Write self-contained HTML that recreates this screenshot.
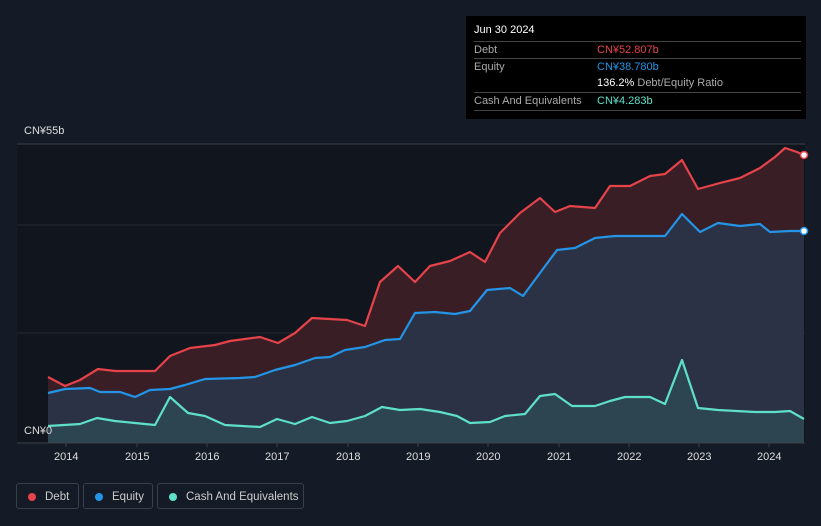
<!DOCTYPE html>
<html><head><meta charset="utf-8"><style>
body{margin:0;width:821px;height:526px;background:#151b26;font-family:"Liberation Sans",sans-serif;overflow:hidden;position:relative}
.tip{position:absolute;left:466px;top:16px;width:340px;height:103px;background:#000;color:#fff;font-size:11px}
.tip .r{position:absolute;left:8px;width:327px;border-top:1px solid #444;height:17px;line-height:17px;color:#aaa}
.tip .v{position:absolute;left:123px;top:0}
.leg{position:absolute;top:483px;height:26px;border:1px solid #3a404a;border-radius:3px;color:#ccc;font-size:11.5px;line-height:26px;box-sizing:border-box}
.leg i{position:absolute;top:9px;left:11px;width:8px;height:8px;border-radius:50%}
.leg span{position:absolute;left:28px}
.ax{position:absolute;top:451px;color:#ddd;font-size:11px}
</style></head><body>
<svg width="821" height="526" style="position:absolute;left:0;top:0">
<rect x="17" y="144" width="788" height="299" fill="#11151d"/>
<line x1="17" y1="144" x2="805" y2="144" stroke="#3a3f48"/>
<line x1="17" y1="225" x2="805" y2="225" stroke="#252a33"/>
<line x1="17" y1="333" x2="805" y2="333" stroke="#252a33"/>
<path fill="#3a1e25" d="M48,377 L65,386 L80,380 L98,369 L115,371 L155,371 L170,356 L190,348 L215,345 L230,341 L260,337 L278,343 L295,333 L312,318 L347,320 L365,326 L380,282 L398,266 L415,282 L430,266 L450,261 L470,252 L485,262 L500,233 L520,213 L540,198 L555,212 L570,206 L595,208 L610,186 L630,186 L650,176 L665,174 L682,160 L698,189 L720,183 L740,178 L760,168 L775,157 L785,148 L797,152 L804,155 L804,443 L48,443Z"/>
<path fill="#2b3246" d="M48,393 L65,389 L90,388 L100,392 L120,392 L135,397 L150,390 L170,389 L185,385 L205,379 L240,378 L255,377 L275,370 L295,365 L315,358 L330,357 L345,350 L365,347 L385,340 L400,339 L415,313 L435,312 L455,314 L470,311 L487,290 L510,288 L523,296 L540,273 L557,250 L575,248 L595,238 L615,236 L665,236 L682,214 L700,232 L718,223 L740,226 L760,224 L770,232 L790,231 L804,231 L804,443 L48,443Z"/>
<path fill="#2d4550" d="M48,426 L80,424 L97,418 L115,421 L135,423 L155,425 L170,397 L188,413 L205,416 L225,425 L260,427 L277,419 L295,424 L312,417 L330,423 L347,421 L365,416 L382,407 L400,410 L420,409 L440,412 L457,416 L470,423 L490,422 L505,416 L525,414 L540,396 L555,394 L572,406 L595,406 L610,401 L625,397 L650,397 L665,404 L682,360 L698,408 L718,410 L755,412 L775,412 L790,411 L804,419 L804,443 L48,443Z"/>
<g fill="none" stroke-width="2.2" stroke-linejoin="round">
<path stroke="#e5434a" d="M48,377 L65,386 L80,380 L98,369 L115,371 L155,371 L170,356 L190,348 L215,345 L230,341 L260,337 L278,343 L295,333 L312,318 L347,320 L365,326 L380,282 L398,266 L415,282 L430,266 L450,261 L470,252 L485,262 L500,233 L520,213 L540,198 L555,212 L570,206 L595,208 L610,186 L630,186 L650,176 L665,174 L682,160 L698,189 L720,183 L740,178 L760,168 L775,157 L785,148 L797,152 L804,155"/>
<path stroke="#2394e6" d="M48,393 L65,389 L90,388 L100,392 L120,392 L135,397 L150,390 L170,389 L185,385 L205,379 L240,378 L255,377 L275,370 L295,365 L315,358 L330,357 L345,350 L365,347 L385,340 L400,339 L415,313 L435,312 L455,314 L470,311 L487,290 L510,288 L523,296 L540,273 L557,250 L575,248 L595,238 L615,236 L665,236 L682,214 L700,232 L718,223 L740,226 L760,224 L770,232 L790,231 L804,231"/>
<path stroke="#5ee0c8" d="M48,426 L80,424 L97,418 L115,421 L135,423 L155,425 L170,397 L188,413 L205,416 L225,425 L260,427 L277,419 L295,424 L312,417 L330,423 L347,421 L365,416 L382,407 L400,410 L420,409 L440,412 L457,416 L470,423 L490,422 L505,416 L525,414 L540,396 L555,394 L572,406 L595,406 L610,401 L625,397 L650,397 L665,404 L682,360 L698,408 L718,410 L755,412 L775,412 L790,411 L804,419"/>
</g>
<circle cx="804" cy="155" r="3.5" fill="#fff" stroke="#e5434a" stroke-width="1.5"/>
<circle cx="804" cy="231" r="3.5" fill="#fff" stroke="#2394e6" stroke-width="1.5"/>
<line x1="17" y1="443" x2="805" y2="443" stroke="#3a3f48"/>
<g stroke="#3a3f48"><line x1="66" y1="443" x2="66" y2="447"/><line x1="137" y1="443" x2="137" y2="447"/><line x1="207" y1="443" x2="207" y2="447"/><line x1="277" y1="443" x2="277" y2="447"/><line x1="348" y1="443" x2="348" y2="447"/><line x1="418" y1="443" x2="418" y2="447"/><line x1="488" y1="443" x2="488" y2="447"/><line x1="559" y1="443" x2="559" y2="447"/><line x1="629" y1="443" x2="629" y2="447"/><line x1="699" y1="443" x2="699" y2="447"/><line x1="769" y1="443" x2="769" y2="447"/></g>
</svg>
<div style="position:absolute;left:24px;top:125px;color:#ddd;font-size:11px">CN¥55b</div>
<div style="position:absolute;left:24px;top:425px;color:#ddd;font-size:11px">CN¥0</div>
<div class="ax" style="left:54px">2014</div><div class="ax" style="left:125px">2015</div><div class="ax" style="left:195px">2016</div><div class="ax" style="left:265px">2017</div><div class="ax" style="left:336px">2018</div><div class="ax" style="left:406px">2019</div><div class="ax" style="left:476px">2020</div><div class="ax" style="left:547px">2021</div><div class="ax" style="left:617px">2022</div><div class="ax" style="left:687px">2023</div><div class="ax" style="left:757px">2024</div>
<div class="tip">
<div style="position:absolute;left:8px;top:8px">Jun 30 2024</div>
<div class="r" style="top:25px">Debt<span class="v" style="color:#e5434a">CN¥52.807b</span></div>
<div class="r" style="top:42px">Equity<span class="v" style="color:#2394e6">CN¥38.780b</span></div>
<div class="r" style="top:59px;border-top:none"><span class="v" style="color:#fff">136.2% <span style="color:#aaa">Debt/Equity Ratio</span></span></div>
<div class="r" style="top:76px">Cash And Equivalents<span class="v" style="color:#5ee0c8">CN¥4.283b</span></div>
<div style="position:absolute;left:8px;top:94px;width:327px;border-top:1px solid #444"></div>
</div>
<div class="leg" style="left:16px;width:63px"><i style="background:#e5434a"></i><span>Debt</span></div>
<div class="leg" style="left:83px;width:70px"><i style="background:#2394e6"></i><span>Equity</span></div>
<div class="leg" style="left:157px;width:147px"><i style="background:#5ee0c8"></i><span>Cash And Equivalents</span></div>
</body></html>
